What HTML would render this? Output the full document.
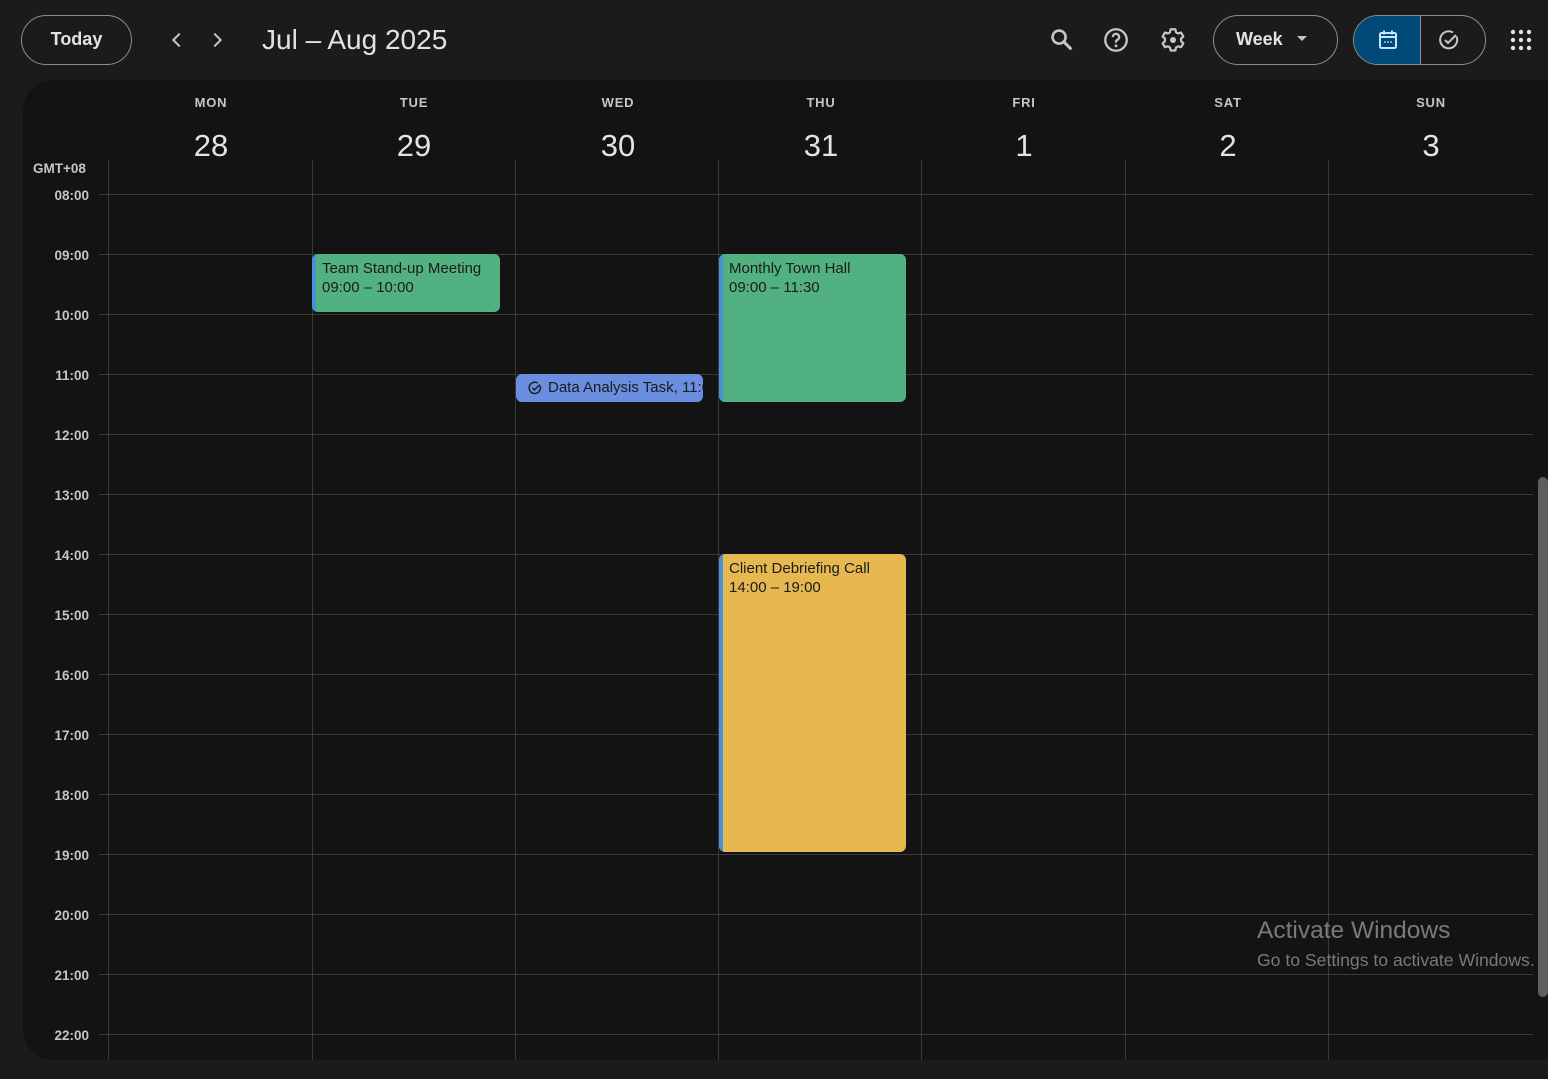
<!DOCTYPE html>
<html><head><meta charset="utf-8"><style>
*{margin:0;padding:0;box-sizing:border-box}
body{width:1548px;height:1079px;background:#1b1b1b;font-family:"Liberation Sans",sans-serif;color:#e3e3e3;position:relative;overflow:hidden}
.a{position:absolute}
.pill{position:absolute;border:1px solid #8e8e8e;border-radius:26px;height:50px;top:15px}
.panel{left:23px;top:80px;width:1545px;height:980px;background:#131313;border-radius:30px}
.dow{font-size:13px;font-weight:bold;letter-spacing:.8px;color:#c4c7c5;top:95px;width:100px;margin-left:-50px;text-align:center}
.day{font-size:31px;color:#e3e3e3;top:128px;width:100px;margin-left:-50px;text-align:center}
.vl{width:1px;background:#3a3a3a}
.hl{height:1px;background:#3a3a3a;left:99px;width:1434px}
.tl{font-size:13.5px;font-weight:bold;color:#c4c7c5;right:1459px;text-align:right}
.ev{border-radius:6px;color:#1b1b1b;font-size:15px;line-height:19px;padding:5px 0 0 10px;overflow:hidden;white-space:nowrap}
.ev .bar{position:absolute;left:0;top:0;bottom:0;width:4px;background:#4a90d9;border-radius:6px 0 0 6px}
</style></head><body>
<div class="pill" style="left:21px;width:111px"></div>
<div class="a" style="left:21px;top:29px;width:111px;text-align:center;font-size:18px;font-weight:bold">Today</div>
<svg class="a" style="left:166px;top:29px" width="22" height="22" viewBox="0 0 24 24"><path d="M15 5l-7 7 7 7" fill="none" stroke="#c4c7c5" stroke-width="2.2"/></svg>
<svg class="a" style="left:206px;top:29px" width="22" height="22" viewBox="0 0 24 24"><path d="M9 5l7 7-7 7" fill="none" stroke="#c4c7c5" stroke-width="2.2"/></svg>
<div class="a" style="left:262px;top:24px;font-size:28px;color:#e3e3e3">Jul – Aug 2025</div>

<svg class="a" style="left:1048px;top:26px" width="28" height="28" viewBox="0 0 24 24"><circle cx="9.5" cy="9.5" r="5.6" fill="none" stroke="#c4c7c5" stroke-width="2.2"/><path d="M13.5 13.5l6.5 6.5" stroke="#c4c7c5" stroke-width="2.6"/></svg>
<svg class="a" style="left:1102px;top:26px" width="28" height="28" viewBox="0 0 24 24"><circle cx="12" cy="12" r="9.2" fill="none" stroke="#c4c7c5" stroke-width="2"/><path d="M9.3 9.5a2.7 2.7 0 1 1 3.8 2.4c-.8.4-1.1.9-1.1 1.8v.6" fill="none" stroke="#c4c7c5" stroke-width="2"/><circle cx="12" cy="17" r="1.2" fill="#c4c7c5"/></svg>
<svg class="a" style="left:1159px;top:26px" width="28" height="28" viewBox="0 0 24 24"><path d="M10 2.8h4l.6 2.6 1.8 1 2.5-.8 2 3.4-2 1.8v2.2l2 1.8-2 3.4-2.5-.8-1.8 1-.6 2.6h-4l-.6-2.6-1.8-1-2.5.8-2-3.4 2-1.8v-2.2l-2-1.8 2-3.4 2.5.8 1.8-1z" fill="none" stroke="#c4c7c5" stroke-width="1.9" stroke-linejoin="round"/><circle cx="12" cy="12" r="2.6" fill="#c4c7c5"/></svg>

<div class="pill" style="left:1213px;width:125px"></div>
<div class="a" style="left:1236px;top:29px;font-size:18px;font-weight:bold">Week</div>
<svg class="a" style="left:1296px;top:35px" width="12" height="8"><path d="M1 1h10L6 6z" fill="#c4c7c5"/></svg>
<div class="pill" style="left:1353px;width:133px;overflow:hidden"><div class="a" style="left:0;top:0;width:66px;height:48px;background:#004a77"></div><div class="a" style="left:66px;top:0;width:1px;height:48px;background:#8e8e8e"></div></div>
<svg class="a" style="left:1376px;top:28px" width="24" height="24" viewBox="0 0 24 24"><rect x="4" y="5" width="16" height="15" rx="1.5" fill="none" stroke="#c2e7ff" stroke-width="2"/><path d="M4 9h16M8 2.5v4M16 2.5v4" stroke="#c2e7ff" stroke-width="2"/><circle cx="9" cy="14" r=".9" fill="#c2e7ff"/><circle cx="12" cy="14" r=".9" fill="#c2e7ff"/><circle cx="15" cy="14" r=".9" fill="#c2e7ff"/></svg>
<svg class="a" style="left:1437px;top:28px" width="24" height="24" viewBox="0 0 24 24"><path d="M19.5 8.5A8.5 8.5 0 1 1 16 4.5" fill="none" stroke="#c4c7c5" stroke-width="2"/><path d="M8 12l3 3 8-8" fill="none" stroke="#c4c7c5" stroke-width="2"/></svg>
<svg class="a" style="left:1510px;top:29px" width="22" height="22" viewBox="0 0 22 22" fill="#e3e3e3"><circle cx="3" cy="3" r="2.2"/><circle cx="11" cy="3" r="2.2"/><circle cx="19" cy="3" r="2.2"/><circle cx="3" cy="11" r="2.2"/><circle cx="11" cy="11" r="2.2"/><circle cx="19" cy="11" r="2.2"/><circle cx="3" cy="19" r="2.2"/><circle cx="11" cy="19" r="2.2"/><circle cx="19" cy="19" r="2.2"/></svg>

<div class="a panel"></div>

<div class="a dow" style="left:211px">MON</div><div class="a day" style="left:211px">28</div>
<div class="a dow" style="left:414px">TUE</div><div class="a day" style="left:414px">29</div>
<div class="a dow" style="left:618px">WED</div><div class="a day" style="left:618px">30</div>
<div class="a dow" style="left:821px">THU</div><div class="a day" style="left:821px">31</div>
<div class="a dow" style="left:1024px">FRI</div><div class="a day" style="left:1024px">1</div>
<div class="a dow" style="left:1228px">SAT</div><div class="a day" style="left:1228px">2</div>
<div class="a dow" style="left:1431px">SUN</div><div class="a day" style="left:1431px">3</div>
<div class="a" style="left:33px;top:161px;font-size:13.5px;font-weight:bold;color:#c4c7c5">GMT+08</div>

<div class="a vl" style="left:108px;top:160px;height:900px"></div>
<div class="a vl" style="left:312px;top:160px;height:900px"></div>
<div class="a vl" style="left:515px;top:160px;height:900px"></div>
<div class="a vl" style="left:718px;top:160px;height:900px"></div>
<div class="a vl" style="left:921px;top:160px;height:900px"></div>
<div class="a vl" style="left:1125px;top:160px;height:900px"></div>
<div class="a vl" style="left:1328px;top:160px;height:900px"></div>

<div class="a hl" style="top:194px"></div><div class="a tl" style="top:188px">08:00</div>
<div class="a hl" style="top:254px"></div><div class="a tl" style="top:248px">09:00</div>
<div class="a hl" style="top:314px"></div><div class="a tl" style="top:308px">10:00</div>
<div class="a hl" style="top:374px"></div><div class="a tl" style="top:368px">11:00</div>
<div class="a hl" style="top:434px"></div><div class="a tl" style="top:428px">12:00</div>
<div class="a hl" style="top:494px"></div><div class="a tl" style="top:488px">13:00</div>
<div class="a hl" style="top:554px"></div><div class="a tl" style="top:548px">14:00</div>
<div class="a hl" style="top:614px"></div><div class="a tl" style="top:608px">15:00</div>
<div class="a hl" style="top:674px"></div><div class="a tl" style="top:668px">16:00</div>
<div class="a hl" style="top:734px"></div><div class="a tl" style="top:728px">17:00</div>
<div class="a hl" style="top:794px"></div><div class="a tl" style="top:788px">18:00</div>
<div class="a hl" style="top:854px"></div><div class="a tl" style="top:848px">19:00</div>
<div class="a hl" style="top:914px"></div><div class="a tl" style="top:908px">20:00</div>
<div class="a hl" style="top:974px"></div><div class="a tl" style="top:968px">21:00</div>
<div class="a hl" style="top:1034px"></div><div class="a tl" style="top:1028px">22:00</div>

<div class="a ev" style="left:312px;top:254px;width:188px;height:58px;background:#52b181"><div class="bar"></div>Team Stand-up Meeting<br>09:00 – 10:00</div>
<div class="a ev" style="left:719px;top:254px;width:187px;height:148px;background:#52b181"><div class="bar"></div>Monthly Town Hall<br>09:00 – 11:30</div>
<div class="a ev" style="left:516px;top:374px;width:187px;height:28px;background:#6b8ee0;padding:4px 0 0 32px"><svg class="a" style="left:11px;top:6px" width="16" height="16" viewBox="0 0 24 24"><path d="M19.5 8.5A8.5 8.5 0 1 1 16 4.5" fill="none" stroke="#1b1b1b" stroke-width="2.2"/><path d="M8 12l3 3 8-8" fill="none" stroke="#1b1b1b" stroke-width="2.2"/></svg>Data Analysis Task, 11:00</div>
<div class="a ev" style="left:719px;top:554px;width:187px;height:298px;background:#e6b84f"><div class="bar"></div>Client Debriefing Call<br>14:00 – 19:00</div>

<div class="a" style="left:1538px;top:477px;width:10px;height:520px;background:#5e5e5e;border-radius:5px"></div>

<div class="a" style="left:1257px;top:917px;font-size:24.5px;color:#7a7a7a">Activate Windows</div>
<div class="a" style="left:1257px;top:950px;font-size:17.6px;color:#7a7a7a;white-space:nowrap">Go to Settings to activate Windows.</div>
</body></html>
